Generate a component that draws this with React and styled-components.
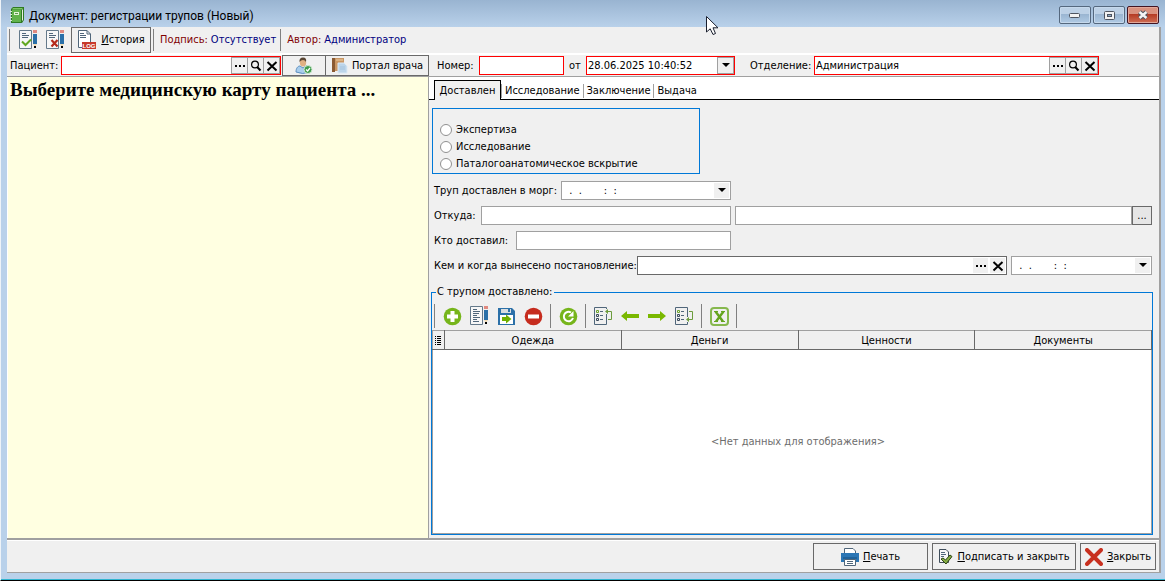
import React from "react";
import styled, { createGlobalStyle, css } from "styled-components";

const uiFont = '"DejaVu Sans Condensed", "DejaVu Sans", sans-serif';

const GlobalStyle = createGlobalStyle`
  *, *::before, *::after { box-sizing: border-box; }
  body { margin: 0; background: #b9d1ea; font: 11px/14px ${uiFont}; color: #000; }
  button, input { font: inherit; color: inherit; margin: 0; padding: 0; }
  svg { display: block; flex: none; }
`;

/* ---------- window frame ---------- */
const Window = styled.div`
  display: flex;
  flex-direction: column;
  min-height: 100vh;
  border-left: 1px solid #eef3f8;
  border-bottom: 1px solid #000;
  box-shadow: inset 0 -1px 0 #2fb4cf;
  background: #b9d1ea;
`;

const TitleBar = styled.header`
  display: flex;
  align-items: flex-start;
  height: 27px;
  padding: 6px 6px 0 8px;
  background: linear-gradient(#99b4d1, #b9d1ea);
`;

const Title = styled.h1`
  flex: 1;
  margin: 0 0 0 4px;
  font: 12px/20px Roboto, "Open Sans", sans-serif;
`;

const WindowButtons = styled.div`
  display: flex;
  gap: 2px;
`;

const WindowButton = styled.button`
  display: flex;
  align-items: center;
  justify-content: center;
  width: 32px;
  height: 18px;
  border: 1px solid ${(p) => (p.$danger ? "#431422" : "#55687e")};
  border-radius: 2px;
  box-shadow: inset 0 0 0 1px ${(p) => (p.$danger ? "#e3a899" : "#c6d9ec")};
  background: ${(p) =>
    p.$danger
      ? "linear-gradient(#d9917f 0 45%, #b53a24 45%, #cf6f55)"
      : "linear-gradient(#bdd1e6 0 45%, #9ab5d1 45%, #b0cae4)"};
`;

const Client = styled.main`
  flex: 1;
  display: flex;
  flex-direction: column;
  margin: 0 4px 7px 6px;
  border: solid #a0a0a0;
  border-width: 0 2px 1px 0;
  background: #f0f0f0;
`;

/* ---------- bars ---------- */
const ToolBar = styled.div`
  display: flex;
  align-items: center;
  height: 26px;
  padding-left: 2px;
`;

const Separator = styled.span`
  width: 1px;
  height: ${(p) => p.$height || 22}px;
  background: #808080;
`;

const IconButton = styled.button`
  display: flex;
  align-items: center;
  justify-content: center;
  width: ${(p) => p.$width || 27}px;
  height: 24px;
  border: 0;
  background: none;
`;

const Button = styled.button`
  display: flex;
  align-items: center;
  justify-content: center;
  gap: 4px;
  width: ${(p) => p.$width}px;
  height: ${(p) => p.$height || 26}px;
  border: 1px solid #696969;
  background: #f0f0f0;
  white-space: nowrap;
`;

const Status = styled.span`
  padding: 0 4px 0 6px;
  color: #000080;
  white-space: nowrap;
`;

const StatusLabel = styled.span`
  margin-right: 3px;
  color: #800000;
`;

const PatientBar = styled.div`
  display: flex;
  align-items: center;
  height: 24px;
  padding: 0 0 0 3px;
  border-top: 2px solid #fff;
  border-bottom: 1px solid #a0a0a0;
`;

/* ---------- fields ---------- */
const Label = styled.label`
  flex: none;
  width: ${(p) => p.$width}px;
  white-space: nowrap;
`;

const tones = { error: "#ff0000", dark: "#696969", plain: "#a0a0a0" };

const Field = styled.span`
  display: flex;
  align-items: stretch;
  flex: ${(p) => (p.$width ? "none" : "1")};
  width: ${(p) => (p.$width ? p.$width + "px" : "auto")};
  min-width: 0;
  height: 19px;
  border: 1px solid ${(p) => tones[p.$tone || "plain"]};
  background: #fff;
`;

const TextBox = styled.input`
  flex: 1;
  min-width: 0;
  width: 0;
  padding: 0 1px;
  border: 0;
  outline: 0;
  background: none;
`;

const FieldButton = styled.button`
  display: flex;
  align-items: center;
  justify-content: center;
  width: ${(p) => (p.$flat ? 15 : 17)}px;
  background: #f0f0f0;
  ${(p) =>
    p.$flat
      ? css`border: 0; margin: 1px;`
      : css`border: 1px solid #a0a0a0; margin-left: -1px;`}
`;

const MoreButton = styled.button`
  width: 20px;
  height: 19px;
  border: 1px solid #696969;
  background: #e6e6e6;
`;

/* ---------- body ---------- */
const Body = styled.div`
  flex: 1;
  display: flex;
  border-bottom: 2px solid #a0a0a0;
`;

const CardPane = styled.aside`
  flex: none;
  width: 422px;
  padding: 2px;
  border-left: 1px solid #fff;
  border-right: 1px solid #a0a0a0;
  background: #ffffe1;
`;

const CardHeading = styled.h2`
  margin: 0;
  font: bold 19px/22px "Liberation Serif", serif;
  white-space: nowrap;
`;

const DocPane = styled.section`
  flex: 1;
  min-width: 0;
  display: flex;
  flex-direction: column;
`;

const Tabs = styled.div`
  display: flex;
  align-items: flex-end;
  height: 23px;
  padding: 0 0 0 5px;
  border-bottom: 1px solid #000;
  background: #fff;
`;

const Tab = styled.button`
  flex: none;
  border: 0;
  background: none;
  white-space: nowrap;
  ${(p) =>
    p.$active
      ? css`
          width: 67px;
          height: 20px;
          margin-bottom: -1px;
          padding-top: 1px;
          border: 1px solid #000;
          border-bottom: 0;
          background: #f0f0f0;
        `
      : css`
          height: 14px;
          margin-bottom: 1px;
          padding: 0 3px;
          & + & { border-left: 1px solid #a0a0a0; }
        `}
`;

const TabPage = styled.div`
  flex: 1;
  display: flex;
  flex-direction: column;
  padding: 8px 6px 3px 2px;
`;

const RadioGroup = styled.fieldset`
  display: flex;
  flex-direction: column;
  gap: 3px;
  width: 268px;
  height: 66px;
  margin: 0 0 7px 1px;
  padding: 14px 7px 0;
  border: 1px solid #0078d7;
`;

const Choice = styled.label`
  display: flex;
  align-items: center;
  gap: 4px;
`;

const Radio = styled.input`
  appearance: none;
  width: 12px;
  height: 12px;
  border: 1px solid #909090;
  border-radius: 50%;
  background: #fff;
`;

const Form = styled.div`
  display: flex;
  flex-direction: column;
  gap: 6px;
  padding: 0 1px 0 3px;
`;

const FormRow = styled.div`
  display: flex;
  align-items: center;
  gap: 4px;
`;

const FormCell = styled.div`
  display: flex;
  align-items: center;
  ${(p) => (p.$grow ? css`flex: 1; min-width: 0;` : css`flex: none; width: 297px;`)}
`;

const ItemsBox = styled.fieldset`
  flex: 1;
  display: flex;
  flex-direction: column;
  min-width: 0;
  margin: 10px 0 0;
  padding: 0;
  border: 1px solid #0078d7;
`;

const Legend = styled.legend`
  margin-left: 4px;
  padding: 0 2px 0 1px;
`;

const ItemsTools = styled(ToolBar)`
  height: 31px;
  padding-top: 3px;
`;

const Table = styled.table`
  flex: 1;
  width: 100%;
  table-layout: fixed;
  border-collapse: collapse;
  border: 1px solid #a0a0a0;
  background: #fff;
`;

const HeadCell = styled.th`
  width: ${(p) => (p.$width ? p.$width + "px" : "auto")};
  height: 19px;
  padding: 1px 0 0;
  border: solid #696969;
  border-width: 0 1px 1px 0;
  border-top: 1px solid #a0a0a0;
  background: #f0f0f0;
  font-weight: normal;
`;

const EmptyCell = styled.td`
  height: 183px;
  padding: 0 0 0 12px;
  text-align: center;
  color: #6d6d6d;
`;

const Footer = styled.footer`
  display: flex;
  align-items: center;
  justify-content: flex-end;
  gap: 4px;
  height: 32px;
  padding-right: 3px;
  border-top: 1px solid #fff;
`;

const Pointer = styled.svg`
  position: absolute;
  left: 706px;
  top: 16px;
  pointer-events: none;
`;

/* ---------- icons ---------- */
const BookIcon = () => (
  <svg width="16" height="18" viewBox="0 0 16 18" aria-hidden="true">
    <path d="M2 3L4 1H15V14L13 17H2Z" fill="#2f7a22" />
    <path d="M3 4H12V16H3Z" fill="#62b34c" />
    <path d="M4 2H14L12.500 3.500H3Z" fill="#7cc766" />
    <path d="M5 6H10V9H5Z" fill="#e4f3d8" />
    <path d="M6 7.500H9" stroke="#5b9a4a" />
    <path d="M13.500 3.500V14.500" stroke="#e8efe0" />
    <path d="M1 5.500H3M1 8.500H3M1 11.500H3M1 14.500H3" stroke="#dcecd2" />
  </svg>
);

const Pencil = () => (
  <g>
    <path d="M14 0H18V3H14Z" fill="#e08a80" />
    <path d="M14 4H18V14H14Z" fill="#2b70a8" />
    <path d="M14 14H18L16 17Z" fill="#f2dcb5" />
    <path d="M15 16H17V18H15Z" fill="#000" />
  </g>
);

const Sheet = () => (
  <g fill="none" stroke="#50667a">
    <path d="M.5 .5H12.500V18.500H.5Z" fill="#f7f7f7" stroke="#64798a" />
    <path d="M3 3.500H7M3 5.500H10M3 7.500H9" />
  </g>
);

const SheetOkIcon = () => (
  <svg width="19" height="20" viewBox="0 0 19 20" aria-hidden="true">
    <Sheet /><Pencil />
    <path d="M3 11.500L6.500 15L12 9.500" fill="none" stroke="#62a820" strokeWidth="2" />
  </svg>
);

const SheetNoIcon = () => (
  <svg width="19" height="20" viewBox="0 0 19 20" aria-hidden="true">
    <Sheet /><Pencil />
    <path d="M5.500 10L11.500 16.500M11.500 10L5.500 16.500" fill="none" stroke="#b52a1c" strokeWidth="2.200" />
  </svg>
);

const EditIcon = () => (
  <svg width="19" height="20" viewBox="0 0 19 20" aria-hidden="true">
    <Sheet /><Pencil />
    <path d="M3 9.500H7M3 11.500H10M3 13.500H7M3 15.500H9" stroke="#50667a" />
  </svg>
);

const LogIcon = () => (
  <svg width="20" height="20" viewBox="0 0 20 20" aria-hidden="true">
    <path d="M1.500 .5H10L13.500 4V17.500H1.500Z" fill="#fff" stroke="#50667a" />
    <path d="M10 .5V4H13.500" fill="none" stroke="#50667a" />
    <path d="M3 3.500H7M3 5.500H9M3 7.500H9" stroke="#50667a" />
    <path d="M5 12H19V19H5Z" fill="#c8392b" />
    <text x="12" y="18" textAnchor="middle" fontSize="6" fontWeight="bold" fontFamily="Liberation Sans" fill="#fff">LOG</text>
  </svg>
);

const PersonIcon = () => (
  <svg width="18" height="18" viewBox="0 0 18 18" aria-hidden="true">
    <path d="M1 15C1 11 3 9 5 9L8 11L11 9C13 9 14 11 14 15Q8 18 1 15Z" fill="#a9cdec" stroke="#5d8fc0" />
    <ellipse cx="8" cy="5.500" rx="3.200" ry="4" fill="#e0b083" />
    <path d="M4.500 5Q4 .5 8 .5Q12 .5 11 5Q10 3 8 3Q6 3 4.500 5Z" fill="#5a4634" />
    <circle cx="13" cy="12.500" r="4" fill="#3e9a4c" stroke="#cfe9d0" />
    <path d="M11 12.500L12.600 14L15 11" fill="none" stroke="#fff" strokeWidth="1.300" />
  </svg>
);

const JournalIcon = () => (
  <svg width="17" height="17" viewBox="0 0 17 17" aria-hidden="true">
    <path d="M1 1H13V14H1Z" fill="#c99663" />
    <path d="M1 1H4V15H1Z" fill="#8a5a33" />
    <path d="M5 3H12" stroke="#ecd0a8" />
    <path d="M7 6H13L16 9V16H7Z" fill="#bcd5ea" stroke="#dbe9f5" />
    <path d="M9 10H14M9 12H14" stroke="#a5c3de" />
  </svg>
);

const DotsIcon = () => (
  <svg width="12" height="12" viewBox="0 0 12 12" aria-hidden="true">
    <path d="M1 5H3V7H1ZM5 5H7V7H5ZM9 5H11V7H9Z" />
  </svg>
);

const SearchIcon = () => (
  <svg width="12" height="12" viewBox="0 0 12 12" aria-hidden="true">
    <circle cx="5" cy="4.500" r="3.400" fill="none" stroke="#000" strokeWidth="1.200" />
    <path d="M7.200 7L10.500 10.500" stroke="#000" strokeWidth="2" />
  </svg>
);

const CrossIcon = () => (
  <svg width="12" height="12" viewBox="0 0 12 12" aria-hidden="true">
    <path d="M1.500 2L10.500 10.500M10.500 2L1.500 10.500" stroke="#000" strokeWidth="2" />
  </svg>
);

const DownIcon = () => (
  <svg width="8" height="5" viewBox="0 0 8 5" aria-hidden="true">
    <path d="M0 0H8L4 4Z" />
  </svg>
);

const AddIcon = () => (
  <svg width="19" height="19" viewBox="0 0 19 19" aria-hidden="true">
    <circle cx="9.500" cy="9.500" r="8.800" fill="#76b51b" />
    <path d="M9.500 4V15M4 9.500H15" stroke="#fff" strokeWidth="4" />
  </svg>
);

const SaveIcon = () => (
  <svg width="19" height="19" viewBox="0 0 19 19" aria-hidden="true">
    <path d="M1 1H15L18 4V18H1Z" fill="#2b70a8" />
    <path d="M4 2H14V6H4Z" fill="#d9dde0" />
    <path d="M11 2H13V5H11Z" fill="#2b70a8" />
    <path d="M3 8H16V17H3Z" fill="#fff" />
    <path d="M5 10H9V7.500L14.500 12L9 16.500V14H5Z" fill="#6fb000" />
  </svg>
);

const RemoveIcon = () => (
  <svg width="19" height="19" viewBox="0 0 19 19" aria-hidden="true">
    <circle cx="9.500" cy="9.500" r="8.800" fill="#c62c1e" />
    <path d="M4 9.500H15" stroke="#fff" strokeWidth="4" />
  </svg>
);

const RefreshIcon = () => (
  <svg width="19" height="19" viewBox="0 0 19 19" aria-hidden="true">
    <circle cx="9.500" cy="9.500" r="8.800" fill="#76b51b" />
    <path d="M12 5.500A4.700 4.700 0 1 0 14 11" fill="none" stroke="#fff" strokeWidth="2" />
    <path d="M14.500 4V9.500H9Z" fill="#fff" />
  </svg>
);

const ListIcon = ({ down }) => (
  <svg width="19" height="19" viewBox="0 0 19 19" fill="none" aria-hidden="true">
    <path d={down ? "M12.500 10V.5H.5V17.500H12.500V15" : "M12.500 2V.5H.5V17.500H12.500V7"} stroke="#50667a" />
    <path d="M2.500 3.500H4.500V5.500H2.500Z" stroke="#6ba32c" />
    <path d="M2.500 7.500H4.500V9.500H2.500ZM2.500 11.500H4.500V13.500H2.500Z" stroke="#38495a" />
    <path d="M6 4.500H9M6 8.500H9M6 12.500H9" stroke="#50667a" />
    {down ? (
      <>
        <path d="M14 4.500H17.500V12.500H12" stroke="#6c9c3c" />
        <path d="M14 10L11 12.500L14 15Z" fill="#6c9c3c" />
      </>
    ) : (
      <>
        <path d="M12 4.500H17.500V12.500H14" stroke="#6c9c3c" />
        <path d="M14 2L11 4.500L14 7Z" fill="#6c9c3c" />
      </>
    )}
  </svg>
);

const ArrowIcon = ({ right }) => (
  <svg width="19" height="19" viewBox="0 0 19 19" aria-hidden="true">
    <path
      d={right ? "M0 7H12V4L18 9L12 14V11H0Z" : "M18 7H6V4L0 9L6 14V11H18Z"}
      fill="#7ab800"
    />
  </svg>
);

const ExcelIcon = () => (
  <svg width="19" height="19" viewBox="0 0 19 19" fill="none" aria-hidden="true">
    <rect x="1" y="1" width="17" height="17" rx="3" stroke="#86b84e" strokeWidth="2" />
    <path d="M5.500 4.500L13 14.500M13.500 4.500L6 14.500" stroke="#64a51e" strokeWidth="2.400" />
    <path d="M4 4.500H8M11 4.500H15M4 14.500H8M11 14.500H15" stroke="#64a51e" />
  </svg>
);

const PrinterIcon = () => (
  <svg width="18" height="18" viewBox="0 0 18 18" aria-hidden="true">
    <path d="M3.500 .5H12L14.500 3V6H3.500Z" fill="#fff" stroke="#50667a" />
    <path d="M0 5H18V14H0Z" fill="#2b76b5" />
    <path d="M2 10H16" stroke="#174f7e" />
    <path d="M3.500 11.500H14.500V17.500H3.500Z" fill="#fff" stroke="#50667a" />
    <path d="M6 13.500H12M6 15.500H12" stroke="#50667a" />
  </svg>
);

const SignIcon = () => (
  <svg width="15" height="17" viewBox="0 0 15 17" aria-hidden="true">
    <path d="M1.500 1.500H8L10.500 4V14.500H1.500Z" fill="#f7f7f7" stroke="#3f4d5a" />
    <path d="M3 4.500H7M3 6.500H8M3 8.500H6" stroke="#50667a" />
    <path d="M3 11L5 10L7.500 12L12 7L14 8.500L8 16Z" fill="#86ad45" stroke="#2d4414" />
  </svg>
);

const BigCrossIcon = () => (
  <svg width="18" height="18" viewBox="0 0 18 18" aria-hidden="true">
    <path d="M2 2L16 16M16 2L2 16" stroke="#c8301f" strokeWidth="4" strokeLinecap="round" />
  </svg>
);

const MinIcon = () => (
  <svg width="12" height="6" viewBox="0 0 12 6" aria-hidden="true">
    <rect x=".5" y="1.500" width="10" height="4" rx="1" fill="#f2f2f2" stroke="#4e5560" />
  </svg>
);

const MaxIcon = () => (
  <svg width="11" height="9" viewBox="0 0 11 9" aria-hidden="true">
    <rect x=".5" y=".5" width="10" height="8" rx="1" fill="#f2f2f2" stroke="#4e5560" />
    <rect x="3.500" y="3.500" width="4" height="2" fill="#8fabc8" stroke="#4e5560" />
  </svg>
);

const CloseIcon = () => (
  <svg width="12" height="10" viewBox="0 0 12 10" aria-hidden="true">
    <path d="M2.500 2L9.500 8M9.500 2L2.500 8" stroke="#4e5560" strokeWidth="4.500" />
    <path d="M2.500 2L9.500 8M9.500 2L2.500 8" stroke="#f4f4f4" strokeWidth="2.500" />
  </svg>
);

const SelectorIcon = () => (
  <svg width="8" height="9" viewBox="0 0 8 9" aria-hidden="true">
    <path d="M2 .5H3M4 .5H8M2 2.500H3M4 2.500H8M2 4.500H3M4 4.500H8M2 6.500H3M4 6.500H8M2 8.500H3M4 8.500H8" stroke="#000" />
  </svg>
);

/* ---------- compound controls ---------- */
const emptyDate = "  .  .       :  :";

const DateField = ({ id, width, tone, flat, value }) => (
  <Field $width={width} $tone={tone}>
    <TextBox id={id} defaultValue={value} aria-label="Дата и время" />
    <FieldButton $flat={flat} aria-label="Открыть календарь"><DownIcon /></FieldButton>
  </Field>
);

const LookupField = ({ id, width, value }) => (
  <Field $width={width} $tone="error">
    <TextBox id={id} defaultValue={value} />
    <FieldButton aria-label="Выбрать"><DotsIcon /></FieldButton>
    <FieldButton aria-label="Найти"><SearchIcon /></FieldButton>
    <FieldButton aria-label="Очистить"><CrossIcon /></FieldButton>
  </Field>
);

const PatientGroup = styled.div`
  display: flex;
  align-items: center;
  width: 419px;
  flex: none;
`;

const PatientButtons = styled.div`
  display: flex;
  margin-left: 1px;
  & > * + * { margin-left: -1px; }
`;

const DocGroup = styled.div`
  display: flex;
  align-items: center;
  padding-left: 8px;
`;

const HistoryWrap = styled.div`
  margin: 0 2px;
`;

const Gap = styled.span`
  width: ${(p) => p.$width || 5}px;
`;

export default function App() {
  return (
    <Window>
      <GlobalStyle />
      <TitleBar>
        <BookIcon />
        <Title>Документ: регистрации трупов (Новый)</Title>
        <WindowButtons>
          <WindowButton aria-label="Свернуть"><MinIcon /></WindowButton>
          <WindowButton aria-label="Развернуть"><MaxIcon /></WindowButton>
          <WindowButton $danger aria-label="Закрыть окно"><CloseIcon /></WindowButton>
        </WindowButtons>
      </TitleBar>

      <Client>
        <ToolBar>
          <Separator />
          <Gap />
          <IconButton aria-label="Подписать"><SheetOkIcon /></IconButton>
          <IconButton aria-label="Снять подпись"><SheetNoIcon /></IconButton>
          <HistoryWrap>
            <Button $width={80}><LogIcon /><span><u>И</u>стория</span></Button>
          </HistoryWrap>
          <Separator />
          <Status><StatusLabel>Подпись:</StatusLabel>Отсутствует</Status>
          <Separator />
          <Status><StatusLabel>Автор:</StatusLabel>Администратор</Status>
        </ToolBar>

        <PatientBar>
          <PatientGroup>
            <Label htmlFor="patient" $width={51}>Пациент:</Label>
            <LookupField id="patient" width={220} />
            <PatientButtons>
              <Button $width={44} $height={21} aria-label="Карта пациента"><PersonIcon /></Button>
              <Button $width={104} $height={21}><JournalIcon />Портал врача</Button>
            </PatientButtons>
          </PatientGroup>
          <DocGroup>
            <Label htmlFor="number" $width={42}>Номер:</Label>
            <Field $width={85} $tone="error"><TextBox id="number" /></Field>
            <Gap />
            <Label htmlFor="date" $width={17}>от</Label>
            <DateField id="date" width={149} tone="error" value="28.06.2025 10:40:52" />
            <Gap $width={15} />
            <Label htmlFor="dept" $width={64}>Отделение:</Label>
            <LookupField id="dept" width={285} value="Администрация" />
          </DocGroup>
        </PatientBar>

        <Body>
          <CardPane>
            <CardHeading>Выберите медицинскую карту пациента ...</CardHeading>
          </CardPane>

          <DocPane>
            <Tabs role="tablist">
              <Tab role="tab" aria-selected="true" $active>Доставлен</Tab>
              <Tab role="tab">Исследование</Tab>
              <Tab role="tab">Заключение</Tab>
              <Tab role="tab">Выдача</Tab>
            </Tabs>

            <TabPage>
              <RadioGroup aria-label="Цель доставки">
                {["Экспертиза", "Исследование", "Паталогоанатомическое вскрытие"].map((text) => (
                  <Choice key={text}><Radio type="radio" name="purpose" />{text}</Choice>
                ))}
              </RadioGroup>

              <Form>
                <FormRow>
                  <FormCell>
                    <Label htmlFor="arrived" $width={127}>Труп доставлен в морг:</Label>
                    <DateField id="arrived" flat value={emptyDate} />
                  </FormCell>
                </FormRow>
                <FormRow>
                  <FormCell>
                    <Label htmlFor="from" $width={47}>Откуда:</Label>
                    <Field><TextBox id="from" /></Field>
                  </FormCell>
                  <FormCell $grow>
                    <Field><TextBox aria-label="Откуда, подробно" /></Field>
                    <MoreButton aria-label="Выбрать место">...</MoreButton>
                  </FormCell>
                </FormRow>
                <FormRow>
                  <FormCell>
                    <Label htmlFor="who" $width={82}>Кто доставил:</Label>
                    <Field><TextBox id="who" /></Field>
                  </FormCell>
                </FormRow>
                <FormRow>
                  <FormCell $grow>
                    <Label htmlFor="order" $width={203}>Кем и когда вынесено постановление:</Label>
                    <Field $tone="dark">
                      <TextBox id="order" />
                      <FieldButton $flat aria-label="Выбрать"><DotsIcon /></FieldButton>
                      <FieldButton $flat aria-label="Очистить"><CrossIcon /></FieldButton>
                    </Field>
                  </FormCell>
                  <DateField id="order-date" width={141} flat value={emptyDate} />
                </FormRow>
              </Form>

              <ItemsBox>
                <Legend>С трупом доставлено:</Legend>
                <ItemsTools>
                  <Separator $height={24} />
                  <Gap $width={4} />
                  <IconButton aria-label="Добавить"><AddIcon /></IconButton>
                  <IconButton aria-label="Изменить"><EditIcon /></IconButton>
                  <IconButton aria-label="Сохранить"><SaveIcon /></IconButton>
                  <IconButton aria-label="Удалить"><RemoveIcon /></IconButton>
                  <Gap $width={3} />
                  <Separator $height={24} />
                  <IconButton $width={34} aria-label="Обновить"><RefreshIcon /></IconButton>
                  <Separator $height={24} />
                  <Gap $width={4} />
                  <IconButton aria-label="В начало"><ListIcon /></IconButton>
                  <IconButton aria-label="Назад"><ArrowIcon /></IconButton>
                  <IconButton aria-label="Вперёд"><ArrowIcon right /></IconButton>
                  <IconButton aria-label="В конец"><ListIcon down /></IconButton>
                  <Gap $width={3} />
                  <Separator $height={24} />
                  <IconButton $width={34} aria-label="Экспорт в Excel"><ExcelIcon /></IconButton>
                  <Separator $height={24} />
                </ItemsTools>
                <Table>
                  <thead>
                    <tr>
                      <HeadCell $width={12}><SelectorIcon /></HeadCell>
                      <HeadCell scope="col">Одежда</HeadCell>
                      <HeadCell scope="col">Деньги</HeadCell>
                      <HeadCell scope="col">Ценности</HeadCell>
                      <HeadCell scope="col">Документы</HeadCell>
                    </tr>
                  </thead>
                  <tbody>
                    <tr><EmptyCell colSpan={5}>&lt;Нет данных для отображения&gt;</EmptyCell></tr>
                  </tbody>
                </Table>
              </ItemsBox>
            </TabPage>
          </DocPane>
        </Body>

        <Footer>
          <Button $width={115} $height={27}><PrinterIcon /><span><u>П</u>ечать</span></Button>
          <Button $width={144} $height={27}><SignIcon /><span><u>П</u>одписать и закрыть</span></Button>
          <Button $width={76} $height={27}><BigCrossIcon /><span><u>З</u>акрыть</span></Button>
        </Footer>
      </Client>

      <Pointer width="13" height="20" viewBox="0 0 13 20" aria-hidden="true">
        <path d="M.5 .5V16L4.200 12.800L7 18.500L9.500 17.500L7 11.800H12Z" fill="#fff" stroke="#1a1f2e" />
      </Pointer>
    </Window>
  );
}
